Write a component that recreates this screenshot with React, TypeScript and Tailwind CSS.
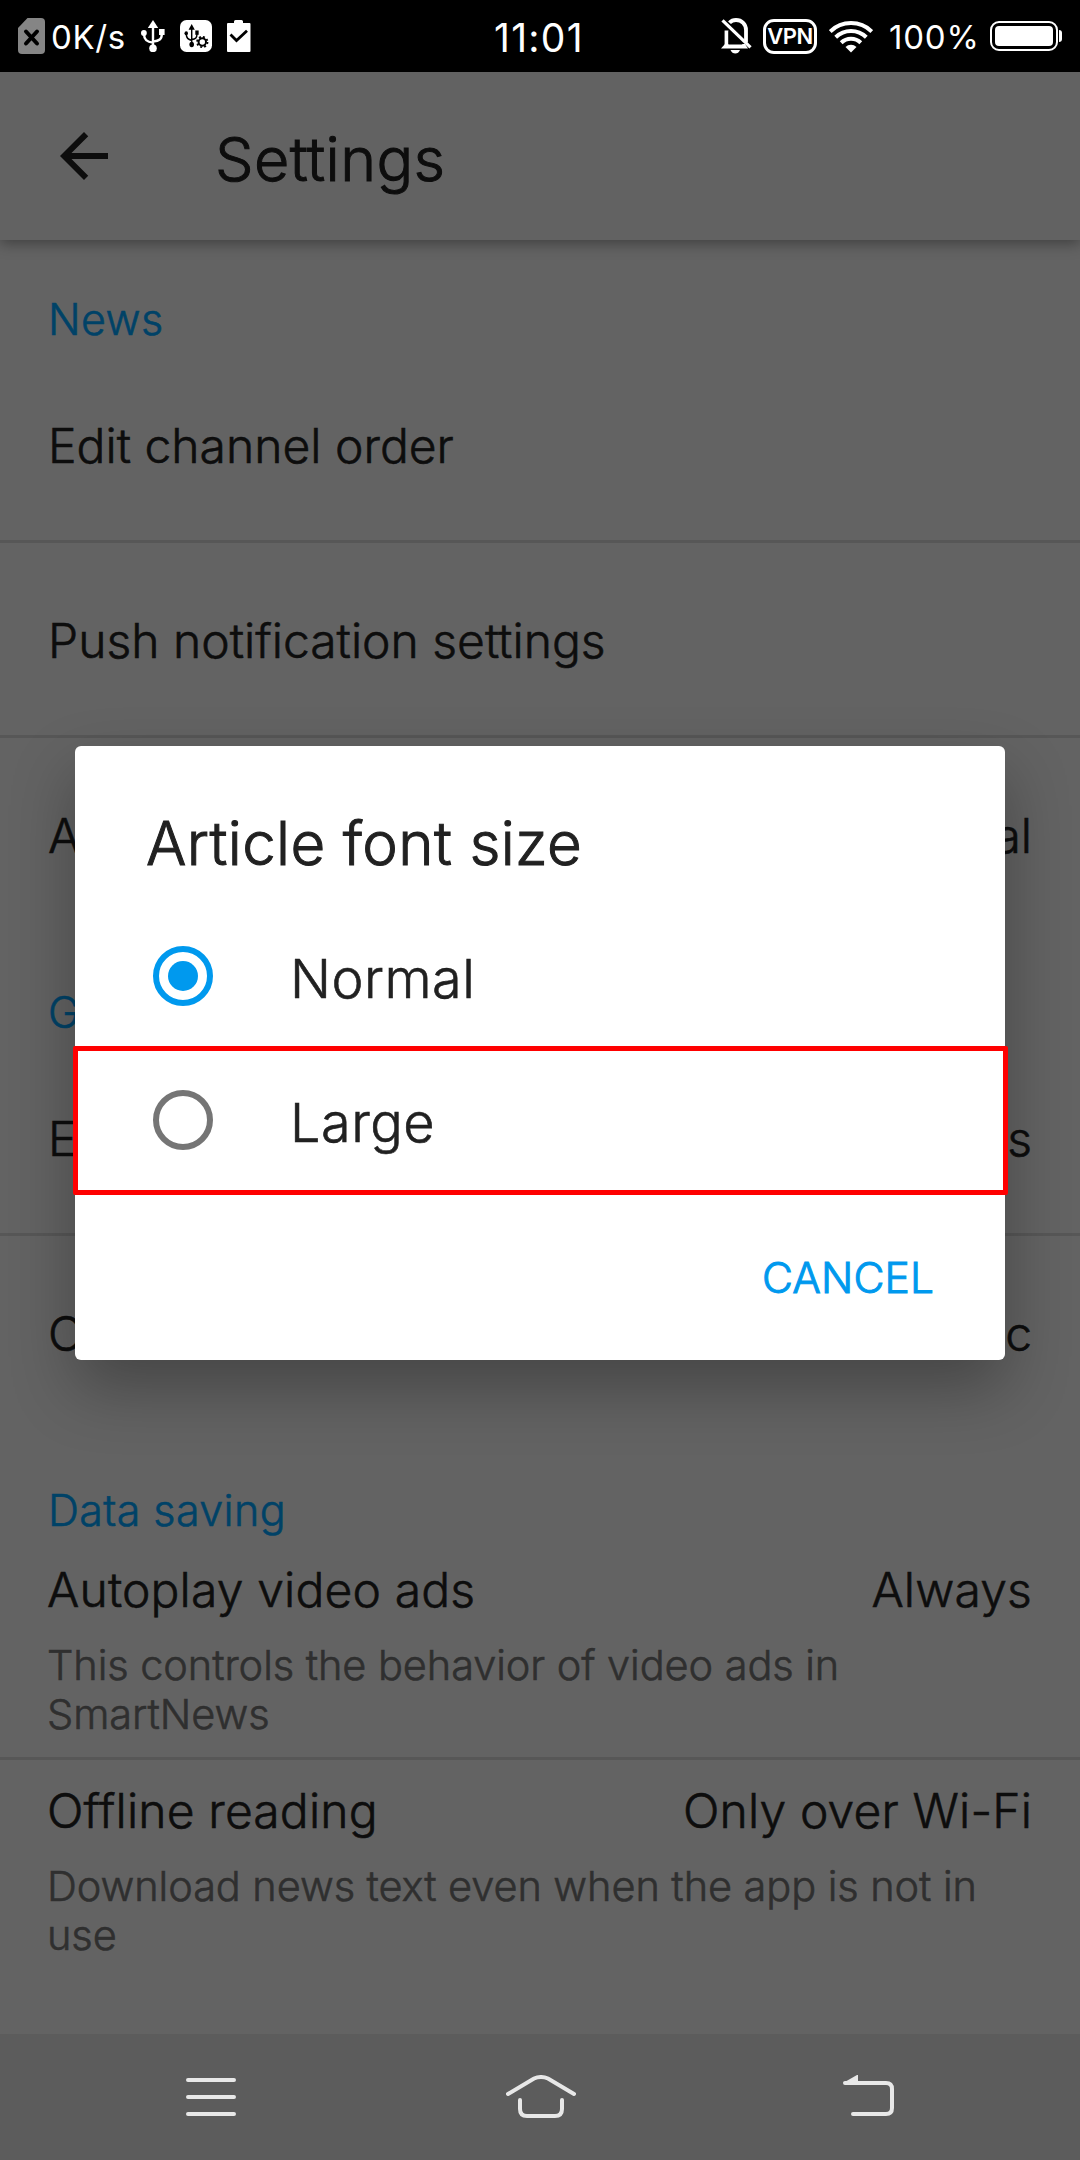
import React from "react";

function SimIcon() {
  return (
    <svg className="ml-[18px] h-9 w-[27px]" viewBox="0 0 27 36">
      <path d="M9.5 0H23a4 4 0 0 1 4 4v28a4 4 0 0 1-4 4H4a4 4 0 0 1-4-4V10z" fill="#858585" />
      <path d="M8 13.5l11 12M19 13.5l-11 12" stroke="#000" strokeWidth="4" strokeLinecap="round" />
    </svg>
  );
}

function UsbGlyph() {
  return (
    <>
      <path d="M12 0l5.2 8H6.8z" fill="currentColor" />
      <circle cx="12" cy="28.4" r="3.8" fill="currentColor" />
      <circle cx="2.9" cy="13" r="2.9" fill="currentColor" />
      <path d="M18 9h5.6v6H18z" fill="currentColor" />
      <path
        d="M12 6v22M3 14c0 5.5 2.5 8 9 8.6M20.8 14c0 5.5-2.5 6.8-8.8 7.6"
        fill="none"
        stroke="currentColor"
        strokeWidth="2.4"
      />
    </>
  );
}

function UsbIcon() {
  return (
    <svg className="ml-[15px] h-8 w-6 text-white" viewBox="0 0 24 32">
      <UsbGlyph />
    </svg>
  );
}

function UsbDebugIcon() {
  return (
    <svg className="ml-[15px] h-8 w-8 text-black" viewBox="0 0 32 32">
      <rect width="32" height="32" rx="6.5" fill="#fff" />
      <g transform="translate(4.5 4) scale(.6 .72)">
        <UsbGlyph />
      </g>
      <circle cx="22.3" cy="22" r="6.5" fill="#fff" />
      <circle cx="22.3" cy="22" r="3.7" fill="none" stroke="#000" strokeWidth="2" />
      <circle cx="22.3" cy="22" r="5.2" fill="none" stroke="#000" strokeWidth="1.8" strokeDasharray="2 2.084" />
    </svg>
  );
}

function ClipboardIcon() {
  return (
    <svg className="ml-[15px] h-8 w-6" viewBox="0 0 24 32">
      <path d="M1 3h6V1.5Q7 0 8.500 0h6Q16 0 16 1.500V3h6.500q1 0 1 1v27q0 1-1 1H1q-1 0-1-1V4q0-1 1-1z" fill="#fff" />
      <path d="M3.5 14.5l6 6L20 10.8" fill="none" stroke="#000" strokeWidth="2.8" />
    </svg>
  );
}

function BellOffIcon() {
  return (
    <svg className="h-9 w-[31px]" viewBox="0 0 31 36">
      <path
        d="M5.5 28V12.500M8.500 4.800C10.500 2.500 12.600 2 15 2c5.800 0 10 4.300 10 10v12.500"
        fill="none"
        stroke="#fff"
        strokeWidth="3.8"
      />
      <path d="M0 30.5l4-4.500h20l3 4.500z" fill="#fff" />
      <path d="M9.5 32h9.500q-1.500 3.500-4.700 3.500T9.500 32z" fill="#fff" />
      <path d="M7.5 13v13.500h14z" fill="#000" />
      <path d="M1.5 2.300l28 27" stroke="#fff" strokeWidth="3.2" />
    </svg>
  );
}

function WifiIcon() {
  return (
    <svg className="ml-[12px] h-[33px] w-11" viewBox="0 0 44 33">
      <g fill="none" stroke="#fff" strokeWidth="4">
        <path d="M1.2 11.5a29.8 29.8 0 0 1 41.6 0" />
        <path d="M6.7 17.2a22 22 0 0 1 30.6 0" />
        <path d="M12.2 22.8a14 14 0 0 1 19.6 0" />
      </g>
      <path d="M16.5 27a8 8 0 0 1 11 0L22 32.500z" fill="#fff" />
    </svg>
  );
}

function StatusBar() {
  return (
    <div className="grid h-[72px] grid-cols-[496px_1fr_auto] items-center bg-black font-normal text-white [-webkit-text-stroke:0px]">
      <div className="flex items-center">
        <SimIcon />
        <span className="mt-[2px] ml-[6px] text-[33px] leading-9 tracking-[0.6px]">0K/s</span>
        <UsbIcon />
        <UsbDebugIcon />
        <ClipboardIcon />
      </div>
      <span className="mt-[3px] -ml-[2px] text-[39px] leading-10 tracking-[1.3px]">11:01</span>
      <div className="flex items-center pr-[18px]">
        <BellOffIcon />
        <span className="ml-[11px] flex h-[35px] w-[54px] items-center justify-center rounded-[11px] border-[3px] border-white text-[22px] font-semibold tracking-[-0.4px]">
          VPN
        </span>
        <WifiIcon />
        <span className="mt-[2px] ml-[16px] w-[88px] text-[33px] leading-9 tracking-[0.8px]">100%</span>
        <span className="ml-[13px] flex h-[30px] w-[68px] rounded-[9px] border-2 border-white p-[3px]">
          <span className="flex-1 rounded-[4px] bg-white" />
        </span>
        <span className="ml-px h-3 w-[3px] rounded-r-[3px] bg-white" />
      </div>
    </div>
  );
}

function Toolbar() {
  return (
    <div className="relative flex h-[168px] items-center bg-[#626262] shadow-[0_3px_14px_rgba(0,0,0,0.38)]">
      <svg className="ml-12 h-[72px] w-[72px]" viewBox="0 0 24 24" fill="#0d0d0d">
        <path d="M20 11H7.83l5.59-5.59L12 4l-8 8 8 8 1.41-1.41L7.83 13H20v-2z" />
      </svg>
      <h1 className="mt-[5px] ml-[95px] text-[61px] leading-[72px] font-light tracking-[0.4px] [-webkit-text-stroke:1px]">
        Settings
      </h1>
    </div>
  );
}

function Section({ children, first }: { children: React.ReactNode; first?: boolean }) {
  return (
    <h2
      className={`flex items-end px-12 pb-[4px] text-[43px] leading-[50px] font-light tracking-[0.4px] text-[#004267] ${
        first ? "h-[108px]" : "h-[111px]"
      }`}
    >
      {children}
    </h2>
  );
}

function Row({ label, value, divider }: { label: string; value?: string; divider?: boolean }) {
  return (
    <div
      className={`flex items-center justify-between px-12 pt-[4px] text-[48px] ${
        divider ? "h-[195px] border-b-[3px] border-[#575757]" : "h-[192px]"
      }`}
    >
      <span>{label}</span>
      <span>{value}</span>
    </div>
  );
}

function DetailRow(props: { label: string; value: string; detail: string; divider?: boolean }) {
  return (
    <div className={`pt-[22px] pr-12 pl-[47px] ${props.divider ? "h-[221px] border-b-[3px] border-[#575757]" : "h-[218px]"}`}>
      <div className="flex justify-between text-[48px] leading-[58px] tracking-[0.15px]">
        <span>{props.label}</span>
        <span>{props.value}</span>
      </div>
      <p className="mt-[22px] w-[950px] text-[41.5px] leading-[49px] tracking-[-0.08px] text-[#2f2f2f]">{props.detail}</p>
    </div>
  );
}

function Option({ label, checked }: { label: string; checked?: boolean }) {
  return (
    <div className="flex h-36 items-center pl-[78px]">
      <span
        className={`flex h-[60px] w-[60px] items-center justify-center rounded-full border-[6px] ${
          checked ? "border-[#0099ee]" : "border-[#757575]"
        }`}
      >
        {checked && <span className="h-[30px] w-[30px] rounded-full bg-[#0099ee]" />}
      </span>
      <span className="mt-[5px] ml-[77px] text-[54px] tracking-[0.5px]">{label}</span>
    </div>
  );
}

function FontSizeDialog() {
  return (
    <div className="absolute top-[746px] left-[75px] flex h-[614px] w-[930px] flex-col rounded-[6px] bg-white text-[#212121] shadow-[0_28px_64px_rgba(0,0,0,0.3)]">
      <h2 className="pt-[61px] pl-[71px] text-[60px] leading-[72px] font-light tracking-[0.35px] [-webkit-text-stroke:1px]">
        Article font size
      </h2>
      <div className="mt-[25px]">
        <Option label="Normal" checked />
        <div className="relative">
          <Option label="Large" />
          <div className="absolute -top-[2px] -right-[3px] -left-[2px] h-[149px] rounded-[2px] border-[5px] border-[#ff0000]" />
        </div>
      </div>
      <button className="mt-[61px] mr-[71px] self-end text-[42.5px] leading-[50px] font-light tracking-[0.1px] text-[#0099ee] [-webkit-text-stroke:1px]">
        CANCEL
      </button>
    </div>
  );
}

function NavBar() {
  return (
    <div className="flex h-[126px] items-start bg-[#5c5c5c] pt-[41px] pl-[186px]">
      <svg className="h-11 w-[50px]" viewBox="0 0 50 44" stroke="#e8e8e8" strokeWidth="4" strokeLinecap="round">
        <path d="M2 5h46M2 22h46M2 39h46" />
      </svg>
      <svg className="ml-[270px] h-11 w-[70px]" viewBox="0 0 70 44" fill="none" stroke="#e8e8e8" strokeWidth="4" strokeLinecap="round">
        <path d="M2 19L28 3.5Q35 .5 42 3.5L68 19" />
        <path d="M14 25v9q0 7 7 7h28q7 0 7-7v-9" />
      </svg>
      <svg className="ml-[267px] h-11 w-[52px]" viewBox="0 0 52 44" fill="none" stroke="#e8e8e8" strokeWidth="4" strokeLinecap="round">
        <path d="M2 8h41q6 0 6 6v19q0 6-6 6H10" />
        <path d="M0 8L14 0h1v8z" fill="#e8e8e8" stroke="none" />
      </svg>
    </div>
  );
}

export default function App() {
  return (
    <div className="relative flex h-[2160px] w-[1080px] flex-col overflow-hidden bg-[#636363] font-['Inter',sans-serif] font-light text-[#0d0d0d] [-webkit-text-stroke:0.6px]">
      <StatusBar />
      <Toolbar />
      <div className="flex-1">
        <Section first>News</Section>
        <Row label="Edit channel order" divider />
        <Row label="Push notification settings" divider />
        <Row label="Article font size" value="Normal" />
        <Section>General</Section>
        <Row label="Edition" value="United States" divider />
        <Row label="Color theme" value="Automatic" />
        <Section>Data saving</Section>
        <DetailRow
          label="Autoplay video ads"
          value="Always"
          detail="This controls the behavior of video ads in SmartNews"
          divider
        />
        <DetailRow
          label="Offline reading"
          value="Only over Wi-Fi"
          detail="Download news text even when the app is not in use"
        />
      </div>
      <NavBar />
      <FontSizeDialog />
    </div>
  );
}
